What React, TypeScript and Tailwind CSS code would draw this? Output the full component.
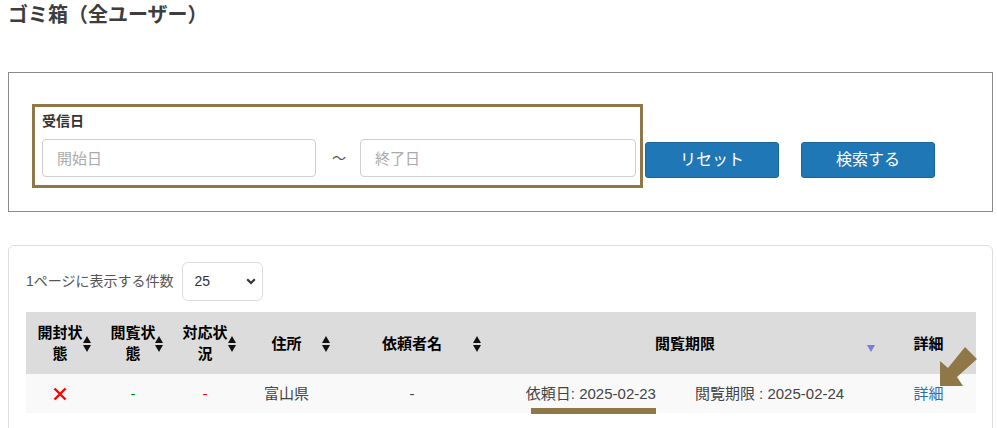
import * as React from "react";

const FONT = '"Liberation Sans", "Noto Sans CJK JP", sans-serif';

function SortIcon({ active }: { active?: boolean }) {
  return (
    <svg width="8" height="16" viewBox="0 0 8 16" className="block">
      {!active && <polygon points="0,7 4,0 8,7" fill="#111" />}
      <polygon points="0,9 8,9 4,16" fill={active ? "#7b7bd8" : "#111"} />
    </svg>
  );
}

type Col = { label: string; width: number; icon: string; pad: string; active?: boolean; noSort?: boolean };

const columns: Col[] = [
  { label: "開封状態", width: 68, icon: "right-[3px]", pad: "px-[9px]" },
  { label: "閲覧状態", width: 78, icon: "right-[9px]", pad: "px-[13px]" },
  { label: "対応状況", width: 66, icon: "right-[2px]", pad: "px-[9px]" },
  { label: "住所", width: 97, icon: "right-[5px]", pad: "px-[9px]" },
  { label: "依頼者名", width: 154, icon: "right-[8px]", pad: "px-[9px]" },
  { label: "閲覧期限", width: 392, icon: "right-[6px]", pad: "px-[9px]", active: true },
  { label: "詳細", width: 95, icon: "", pad: "px-[9px]", noSort: true },
];

function Chevron() {
  return (
    <svg width="10" height="7" viewBox="0 0 10 7" className="block">
      <path d="M1.2 1.2 L5 5 L8.8 1.2" fill="none" stroke="#333" strokeWidth="2.2" />
    </svg>
  );
}

function RedCross() {
  return (
    <svg width="14" height="14" viewBox="0 0 14 14" className="mx-auto block">
      <path d="M1.5 1.5 L12.5 12.5 M12.5 1.5 L1.5 12.5" stroke="#ff0000" strokeWidth="2.4" />
    </svg>
  );
}

function GoldArrow() {
  return (
    <svg
      width="40"
      height="42"
      viewBox="0 0 40 42"
      className="pointer-events-none absolute left-[912px] top-[33px]"
    >
      <polygon points="2,41 2,16 10,23 27,2 39,14 19,32 25,41" fill="#8f7748" />
    </svg>
  );
}

export default function App() {
  return (
    <div className="w-[997px] bg-white pb-4 text-[#444]" style={{ fontFamily: FONT }}>
      <h1 className="ml-[8px] pt-[2px] text-[20px] font-bold leading-[26px] text-[#3d3d3d]">
        ゴミ箱（全ユーザー）
      </h1>

      {/* search panel */}
      <div className="ml-[8px] mt-[44px] w-[985px] border border-[#8a8a8a] pb-[23px] pl-[23px] pt-[31px]">
        <div className="flex items-end">
          <div className="w-[611px] border-[3px] border-[#8f7748] pb-[8px] pl-[7px] pr-[4px] pt-[4px]">
            <div className="mb-[8px] text-[14px] font-bold leading-[20px] text-[#333]">受信日</div>
            <div className="flex items-center">
              <input
                className="h-[38px] w-[274px] rounded-[4px] border border-[#cfcfcf] px-[14px] text-[15px] outline-none placeholder:text-[#aaa]"
                placeholder="開始日"
              />
              <span className="ml-[16px] mr-[14px] w-[14px] text-[14px] text-[#555]">～</span>
              <input
                className="h-[38px] w-[276px] rounded-[4px] border border-[#cfcfcf] px-[14px] text-[15px] outline-none placeholder:text-[#aaa]"
                placeholder="終了日"
              />
            </div>
          </div>
          <button className="mb-[10px] ml-[2px] h-[36px] w-[134px] rounded-[3px] border border-[#1b6699] bg-[#1f78b5] text-[16px] text-white">
            リセット
          </button>
          <button className="mb-[10px] ml-[22px] h-[36px] w-[134px] rounded-[3px] border border-[#1b6699] bg-[#1f78b5] text-[16px] text-white">
            検索する
          </button>
        </div>
      </div>

      {/* table panel */}
      <div className="ml-[8px] mt-[33px] w-[985px] rounded-[6px] border border-[#dddddd] pb-[30px] pl-[17px] pr-[15px] pt-[16px]">
        <div className="flex items-center">
          <span className="text-[14px] text-[#555]">1ページに表示する件数</span>
          <div className="ml-[8px] flex h-[39px] w-[81px] items-center justify-between rounded-[6px] border border-[#dddddd] pl-[12px] pr-[6px] text-[14px] text-[#333]">
            <span>25</span>
            <Chevron />
          </div>
        </div>

        <div className="relative mt-[11px]">
          <table className="w-[950px] table-fixed border-collapse">
            <colgroup>
              {columns.map((c) => (
                <col key={c.label} style={{ width: c.width }} />
              ))}
            </colgroup>
            <thead>
              <tr className="h-[62px] bg-[#dcdcdc]">
                {columns.map((c) => (
                  <th
                    key={c.label}
                    className={`relative ${c.pad} text-center text-[15px] font-bold leading-[21px] text-black`}
                  >
                    {c.label}
                    {!c.noSort && (
                      <span className={`absolute top-[24px] ${c.icon}`}>
                        <SortIcon active={c.active} />
                      </span>
                    )}
                  </th>
                ))}
              </tr>
            </thead>
            <tbody>
              <tr className="h-[39px] bg-[#f9f9f9] text-[15px] leading-[20px]">
                <td className="text-center">
                  <RedCross />
                </td>
                <td className="text-center text-[#008800]">-</td>
                <td className="text-center text-[#ff0000]">-</td>
                <td className="text-center">富山県</td>
                <td className="text-center">-</td>
                <td className="text-center">
                  <span className="relative inline-block">
                    依頼日: 2025-02-23
                    <span className="absolute left-[5px] right-0 top-[24px] h-[6px] bg-[#8f7748]" />
                  </span>
                  <span className="ml-[39px]">閲覧期限 : 2025-02-24</span>
                </td>
                <td className="text-center text-[#2a6fb0]">詳細</td>
              </tr>
            </tbody>
          </table>
          <GoldArrow />
        </div>
      </div>
    </div>
  );
}
